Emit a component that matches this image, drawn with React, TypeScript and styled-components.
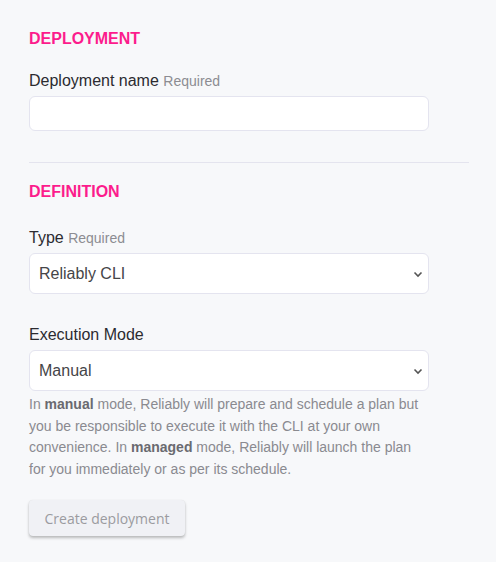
import React from "react";
import styled, { createGlobalStyle } from "styled-components";

const Global = createGlobalStyle`
  html, body { margin: 0; padding: 0; background: #f7f8fa; }
  body { font-family: "Liberation Sans", Arial, sans-serif; color: #2b2b30; }
  * { box-sizing: border-box; }
`;

const Page = styled.form`
  width: 496px;
  min-height: 562px;
  padding: 27px 27px 24px 29px;
  display: flex;
  flex-direction: column;
`;

const Section = styled.section<{ $last?: boolean }>`
  display: flex;
  flex-direction: column;
  padding-bottom: ${(p) => (p.$last ? "0" : "31px")};
  border-bottom: ${(p) => (p.$last ? "none" : "1px solid #e4e4ee")};
  margin-bottom: ${(p) => (p.$last ? "0" : "17px")};
`;

const Heading = styled.h2<{ $gap: number }>`
  margin: 0 0 ${(p) => p.$gap}px;
  font-size: 16px;
  line-height: 24px;
  font-weight: 700;
  color: #fc1c8c;
`;

const Field = styled.div<{ $gap?: number }>`
  display: flex;
  flex-direction: column;
  max-width: 400px;
  margin-bottom: ${(p) => p.$gap ?? 0}px;
`;

const Label = styled.label`
  font-size: 16px;
  line-height: 22px;
  color: #2b2b30;
  margin-bottom: 4px;
`;

const Hint = styled.span`
  font-size: 14px;
  color: #8c8c92;
`;

const TextInput = styled.input`
  height: 35px;
  width: 100%;
  border: 1px solid #e4e4ef;
  border-radius: 6px;
  background: #fff;
  padding: 0 9px;
  font: inherit;
  outline: none;
`;

const SelectBox = styled.div`
  height: 41px;
  width: 100%;
  border: 1px solid #e4e4ef;
  border-radius: 6px;
  background: #fff;
  display: flex;
  align-items: center;
  justify-content: space-between;
  padding: 0 5px 0 9px;
  font-size: 16px;
  color: #454548;
`;

const Chevron = styled.svg`
  width: 10px;
  height: 10px;
  color: #555;
`;

const Help = styled.p`
  margin: 3px 0 0;
  font-size: 14px;
  line-height: 21.5px;
  color: #8a8a90;
  b { color: #6a6a70; font-weight: 700; }
`;

const Button = styled.button`
  margin-top: 20px;
  align-self: flex-start;
  width: 156px;
  height: 36px;
  border: none;
  border-radius: 4px;
  background: #f0f1f5;
  color: #9b9ba0;
  font-family: "Open Sans", "Noto Sans", sans-serif;
  font-size: 14px;
  box-shadow: 0 2px 3px rgba(0, 0, 0, 0.25), 0 0 1px rgba(0, 0, 0, 0.1);
`;

const Select = ({ value }: { value: string }) => (
  <SelectBox>
    <span>{value}</span>
    <Chevron viewBox="0 0 10 10" fill="none">
      <path d="M1.5 3.5 L5 7 L8.5 3.5" stroke="currentColor" strokeWidth="1.6" />
    </Chevron>
  </SelectBox>
);

export default function App() {
  return (
    <>
      <Global />
      <Page onSubmit={(e) => e.preventDefault()}>
        <Section>
          <Heading $gap={19}>DEPLOYMENT</Heading>
          <Field>
            <Label>
              Deployment name <Hint>Required</Hint>
            </Label>
            <TextInput type="text" />
          </Field>
        </Section>
        <Section $last>
          <Heading $gap={23}>DEFINITION</Heading>
          <Field $gap={30}>
            <Label>
              Type <Hint>Required</Hint>
            </Label>
            <Select value="Reliably CLI" />
          </Field>
          <Field>
            <Label>Execution Mode</Label>
            <Select value="Manual" />
            <Help>
              In <b>manual</b> mode, Reliably will prepare and schedule a plan but
              you be responsible to execute it with the CLI at your own
              convenience. In <b>managed</b> mode, Reliably will launch the plan
              for you immediately or as per its schedule.
            </Help>
          </Field>
          <Button type="submit">Create deployment</Button>
        </Section>
      </Page>
    </>
  );
}
